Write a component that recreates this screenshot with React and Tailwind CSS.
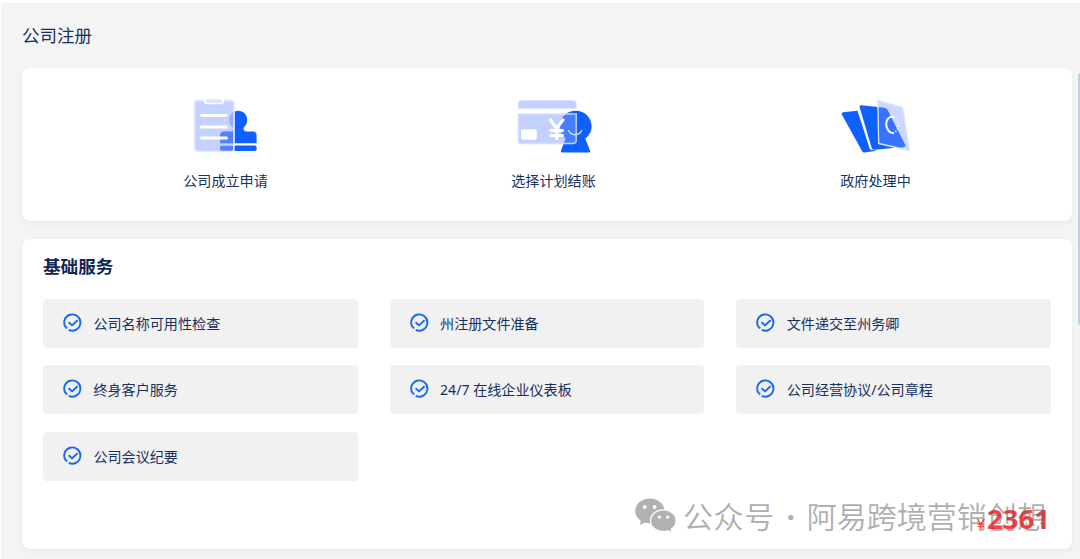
const STEPS = [
  { label: '公司成立申请', Icon: ApplicationIcon },
  { label: '选择计划结账', Icon: CheckoutIcon },
  { label: '政府处理中', Icon: ProcessingIcon },
];

const SERVICES = [
  '公司名称可用性检查',
  '州注册文件准备',
  '文件递交至州务卿',
  '终身客户服务',
  '24/7 在线企业仪表板',
  '公司经营协议/公司章程',
  '公司会议纪要',
];

function ApplicationIcon() {
  return (
    <svg className="h-[60px] w-[80px]" viewBox="186 95 80 60" fill="none">
      <path
        d="M223.500 131.500H230.200C232.800 131.500 234 129.300 232.800 127.200C230.500 125.500 229.200 122.800 229.200 119.800C229.200 114.700 233.200 110.800 238.200 110.800C243.200 110.800 247.200 114.700 247.200 119.800C247.200 122.800 246 125.400 244 127.200C242.800 129.500 244.200 131.500 246.800 131.500H253C255.200 131.500 256.600 133 256.600 135.200V143.200H220V135.200C220 133 221.300 131.500 223.500 131.500Z"
        fill="#1060ff"
      />
      <rect x="220" y="145.600" width="36.600" height="5.400" rx="1.800" fill="#1060ff" />
      <rect x="194.500" y="100.300" width="39.500" height="51.200" rx="3" fill="#b5c5ff" fillOpacity=".78" />
      <path d="M220.200 134.500Q221 131.500 224 131.500H233V143.200H220.200ZM220.200 146H233V151H222Q220.200 151 220.200 149Z" fill="#2c63ff" fillOpacity=".6" />
      <rect x="194.500" y="100.300" width="39.500" height="51.200" rx="3" stroke="#e3e9ff" strokeWidth="1.700" />
      <rect x="204" y="97" width="20" height="7.200" rx="3" fill="white" />
      <rect x="206" y="99.300" width="16" height="3.600" rx="1.500" fill="#dbe3ff" />
      <path d="M201.500 115.500H226.500M201.500 127H226.500M201.500 138H226.500" stroke="white" strokeWidth="3" strokeLinecap="round" />
    </svg>
  );
}

function CheckoutIcon() {
  return (
    <svg className="h-[60px] w-[80px]" viewBox="514 95 80 60" fill="none">
      <path
        d="M575.700 110.800C584.700 110.800 591.600 117.600 591.600 126.300C591.600 131.300 589.200 135.800 585.200 138.600L590 150.500C590.500 151.700 590 152.400 588.800 152.400H562.200C561 152.400 560.500 151.600 561 150.500L565.700 138.500C562 135.500 559.900 131.300 559.900 126.300C559.900 117.600 566.700 110.800 575.700 110.800Z"
        fill="#1060ff"
      />
      <path d="M518.300 108.500V103.500Q518.300 100.500 521.300 100.500H573.200Q576.200 100.500 576.200 103.500V108.500Z" fill="#c4d0ff" stroke="#dbe3ff" />
      <path d="M518.300 114H576.200V140.500Q576.200 143.500 573.200 143.500H521.300Q518.300 143.500 518.300 140.500Z" fill="#adbfff" fillOpacity=".72" />
      <path d="M561.500 119Q565.500 112.700 572 111.500V114H576V140.500Q576 143 573 143H563.800L565.700 138.500Q557.500 130.500 561.500 119Z" fill="#2867ff" fillOpacity=".65" />
      <path d="M518.300 114H576.200V140.500Q576.200 143.500 573.200 143.500H521.300Q518.300 143.500 518.300 140.500Z" stroke="#d5dfff" strokeWidth="1.500" strokeOpacity=".85" />
      <rect x="521" y="129.200" width="15.800" height="10.500" rx="2" fill="white" />
      <path d="M549.700 118.800L556.700 128.500L563.700 118.800M556.700 127.500V140M549.700 130.600H563.700M549.700 135.500H563.700" stroke="white" strokeWidth="3" />
      <path d="M568.500 130.500Q570.700 134.700 575 134.700Q579.500 134.700 581.700 130.500" stroke="#d3e2ff" strokeWidth="1.400" strokeLinecap="round" />
    </svg>
  );
}

function ProcessingIcon() {
  return (
    <svg className="h-[60px] w-[80px]" viewBox="836 95 80 60" fill="none">
      <path d="M843 112.300L857.500 110.800L870 149.500L876.500 150.700L864.500 152.400Q863 152.600 862.200 151.200L841.800 114.500Q841 112.600 843 112.300Z" fill="#1060ff" />
      <path d="M861.500 105.200L884.500 107.800Q886.500 108 887.400 109.800L905.200 144.800Q906 146.800 903.800 147.100L874.500 149.800Q872.500 150 871.700 148L859.700 107.500Q859.200 105.100 861.500 105.200Z" fill="#1060ff" />
      <path d="M877.800 100.500L902.500 107.500L909.500 150.500L878.700 143.500Z" fill="#b8c8ff" fillOpacity=".72" />
      <path d="M878.300 107.200L885 107.900Q886.700 108.100 887.500 110L905.200 145Q905.800 147 903 147.400L896 148L879 143.500Z" fill="#2868ff" fillOpacity=".85" />
      <path d="M877.800 100.500L902.500 107.500L909.500 150.500L878.700 143.500Z" stroke="#dce5ff" strokeWidth="1.300" strokeLinejoin="round" />
      <path d="M893.800 117.200C889.500 115.800 886.200 119 886.200 124C886.200 129.500 890 133.800 894 132.700" stroke="white" strokeWidth="2" />
      <path d="M894 117.300Q897.700 120 898.500 125.500Q898.200 130.500 894 132.700" stroke="#eef2ff" strokeWidth="1.700" strokeDasharray="1.300 1.800" />
    </svg>
  );
}

function CheckIcon() {
  return (
    <svg className="mb-px size-5 shrink-0" viewBox="0 0 20 20" fill="none" stroke="#1768f5" strokeWidth="1.900">
      <path d="M2.900 14.500A8.100 8.100 0 1 1 5.700 16.800" />
      <path d="M2.900 14.500L4.400 15.100" />
      <path d="M6.200 9.700L9 12.400L14 7.700" strokeLinecap="round" strokeLinejoin="round" />
    </svg>
  );
}

function WechatIcon() {
  return (
    <svg className="h-[36px] w-[42px] shrink-0" viewBox="0 0 42 36">
      <path d="M15 .500C6.800 .500 .200 6 .200 13C.200 17 2.300 20.400 5.800 22.700L4.800 27L9.700 24.600Q12.400 25.400 15 25.300C23.200 25.300 29.500 19.900 29.500 13S23.200 .500 15 .500Z" />
      <path d="M28.500 11.800C21.300 11.800 15.500 16.600 15.500 22.700S21.300 33.500 28.500 33.500Q31 33.500 33.300 32.800L37.200 35L36.400 31C39.400 29 41.200 26.200 41.200 22.700C41.200 16.600 35.700 11.800 28.500 11.800Z" stroke="white" strokeWidth="1.300" />
      <g fill="white">
        <circle cx="9.700" cy="9" r="1.900" />
        <circle cx="19.600" cy="9" r="1.900" />
        <circle cx="24.400" cy="19" r="1.600" />
        <circle cx="32.700" cy="19" r="1.600" />
      </g>
    </svg>
  );
}

export default function App() {
  return (
    <div className="h-[559px] overflow-hidden bg-white pt-[3px] pl-px font-['Noto_Sans','Noto_Sans_CJK_SC',sans-serif] text-[#17305f]">
      <div className="relative h-full bg-[#f4f4f4] pr-2 pl-[21px]">
        <h1 className="flex h-[65px] items-center text-[17.500px]">公司注册</h1>

        <section className="flex h-[153px] justify-center gap-[248px] rounded-lg bg-white pl-[7px] shadow-[0_2px_5px_rgba(0,0,0,0.05)]">
          {STEPS.map(({ label, Icon }) => (
            <div key={label} className="flex w-[80px] flex-col items-center pt-[27px] last:-ml-[6px]">
              <Icon />
              <span className="mt-4 text-[14.100px] leading-5 whitespace-nowrap">{label}</span>
            </div>
          ))}
        </section>

        <section className="relative mt-[18px] h-[310px] rounded-lg bg-white px-[21px] pt-[13px] shadow-[0_2px_5px_rgba(0,0,0,0.05)]">
          <h2 className="text-[17.600px] leading-7 font-bold text-[#102657]">基础服务</h2>
          <div className="mt-[19px] grid grid-cols-3 gap-x-8 gap-y-[17.400px]">
            {SERVICES.map((name) => (
              <div key={name} className="flex h-[49px] items-center rounded bg-[#f1f1f1] pl-5">
                <CheckIcon />
                <span className="ml-[10.400px] text-[14.100px] whitespace-nowrap">{name}</span>
              </div>
            ))}
          </div>

          <div className="absolute right-[22px] bottom-[10px] flex items-baseline leading-8 font-bold text-[#ff3c40]">
            <span className="mr-[2px] text-[15px] font-medium">¥</span>
            <span className="text-[27.500px]">2361</span>
          </div>
          <div className="absolute top-[259px] left-[613px] flex fill-[#666] text-[#606060] opacity-50">
            <WechatIcon />
            <div className="-mt-px ml-[6px] flex text-[30px] leading-10 font-[350] whitespace-nowrap">
              <span className="tracking-[0.600px]">公众号</span>
              <span className="w-[32px] text-center font-bold">·</span>
              <span>阿易跨境营销创想</span>
            </div>
          </div>
        </section>

        <div className="absolute top-[70px] right-0 h-[252px] w-[2px] rounded-l bg-[#c1cfdf]" />
      </div>
    </div>
  );
}
